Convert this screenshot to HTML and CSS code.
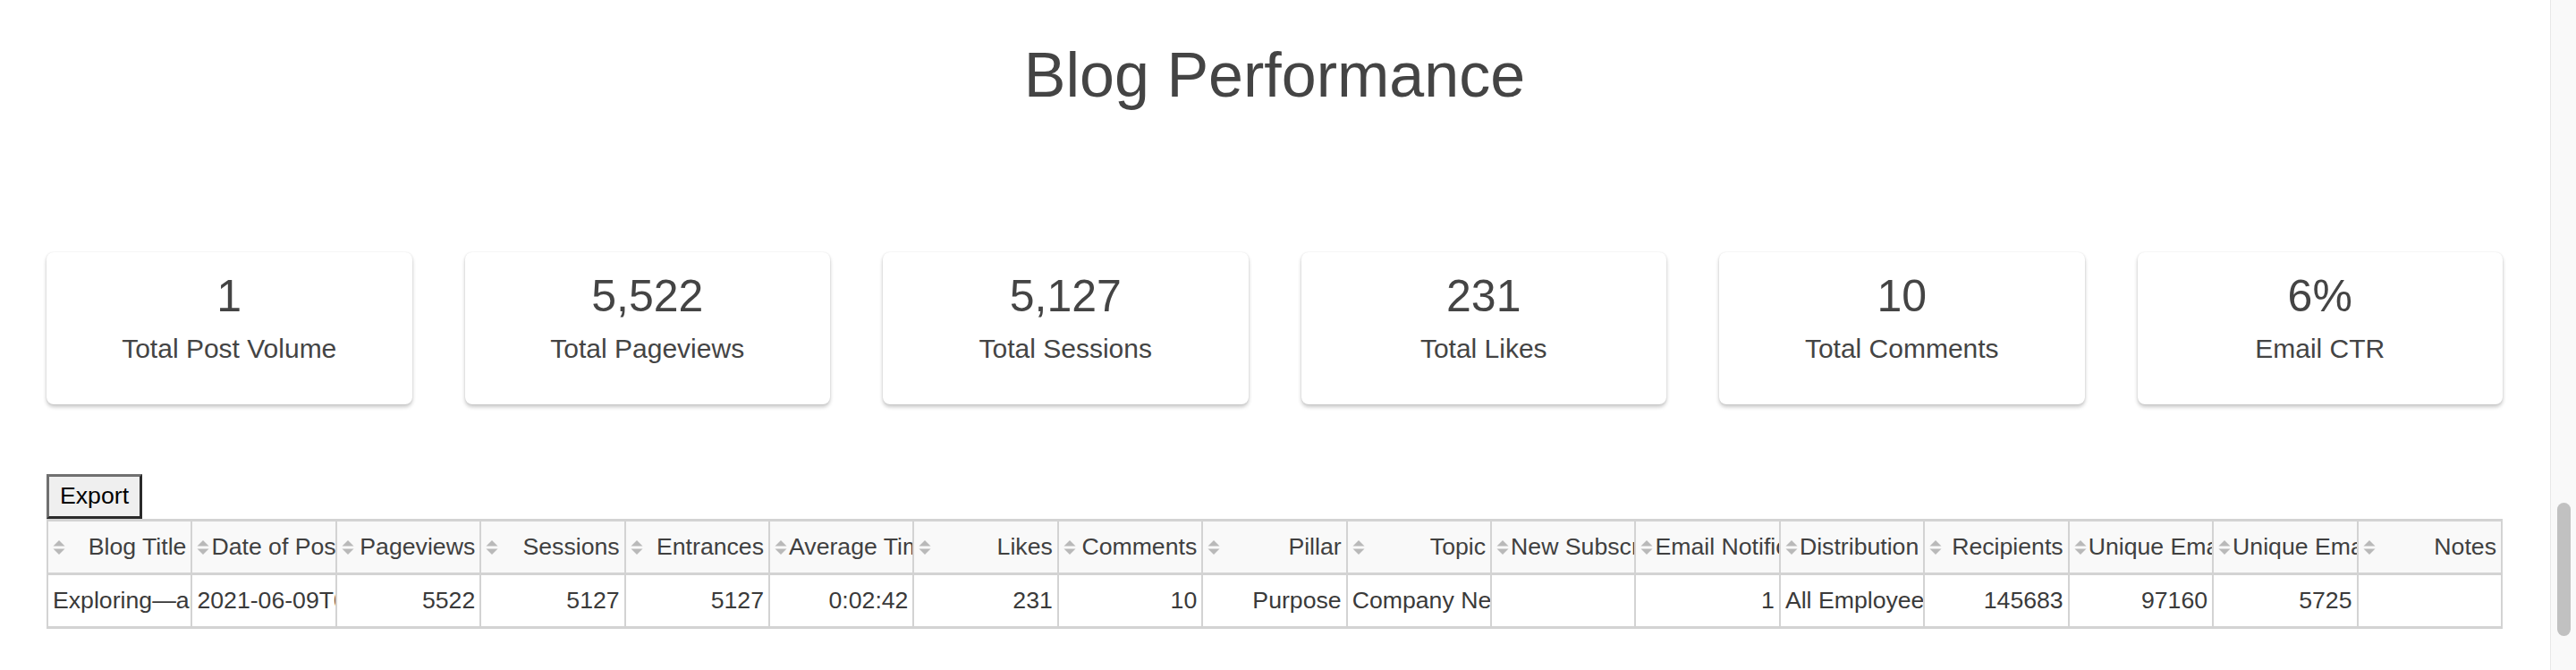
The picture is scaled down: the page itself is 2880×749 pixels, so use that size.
FILE: index.html
```html
<!DOCTYPE html>
<html lang="en">
<head>
<meta charset="utf-8">
<title>Blog Performance</title>
<link rel="stylesheet" href="styles.css">
</head>
<body>
<div class="page">
  <main class="main">
    <h1 class="title">Blog Performance</h1>
    <div class="cards">
      <div class="card"><div class="card-value">1</div><div class="card-label">Total Post Volume</div></div>
      <div class="card"><div class="card-value">5,522</div><div class="card-label">Total Pageviews</div></div>
      <div class="card"><div class="card-value">5,127</div><div class="card-label">Total Sessions</div></div>
      <div class="card"><div class="card-value">231</div><div class="card-label">Total Likes</div></div>
      <div class="card"><div class="card-value">10</div><div class="card-label">Total Comments</div></div>
      <div class="card"><div class="card-value">6%</div><div class="card-label">Email CTR</div></div>
    </div>
    <div class="toolbar"><button class="export" type="button">Export</button></div>
    <table class="data">
      <thead>
        <tr>
          <th><div class="th-inner"><svg class="sort" viewBox="0 0 14 16" width="14" height="16"><polygon points="7,0 13.5,6.5 0.5,6.5"/><polygon points="0.5,9.5 13.5,9.5 7,16"/></svg><span class="th-text">Blog Title</span></div></th>
          <th><div class="th-inner"><svg class="sort" viewBox="0 0 14 16" width="14" height="16"><polygon points="7,0 13.5,6.5 0.5,6.5"/><polygon points="0.5,9.5 13.5,9.5 7,16"/></svg><span class="th-text">Date of Posting</span></div></th>
          <th><div class="th-inner"><svg class="sort" viewBox="0 0 14 16" width="14" height="16"><polygon points="7,0 13.5,6.5 0.5,6.5"/><polygon points="0.5,9.5 13.5,9.5 7,16"/></svg><span class="th-text">Pageviews</span></div></th>
          <th><div class="th-inner"><svg class="sort" viewBox="0 0 14 16" width="14" height="16"><polygon points="7,0 13.5,6.5 0.5,6.5"/><polygon points="0.5,9.5 13.5,9.5 7,16"/></svg><span class="th-text">Sessions</span></div></th>
          <th><div class="th-inner"><svg class="sort" viewBox="0 0 14 16" width="14" height="16"><polygon points="7,0 13.5,6.5 0.5,6.5"/><polygon points="0.5,9.5 13.5,9.5 7,16"/></svg><span class="th-text">Entrances</span></div></th>
          <th><div class="th-inner"><svg class="sort" viewBox="0 0 14 16" width="14" height="16"><polygon points="7,0 13.5,6.5 0.5,6.5"/><polygon points="0.5,9.5 13.5,9.5 7,16"/></svg><span class="th-text">Average Time on Page</span></div></th>
          <th><div class="th-inner"><svg class="sort" viewBox="0 0 14 16" width="14" height="16"><polygon points="7,0 13.5,6.5 0.5,6.5"/><polygon points="0.5,9.5 13.5,9.5 7,16"/></svg><span class="th-text">Likes</span></div></th>
          <th><div class="th-inner"><svg class="sort" viewBox="0 0 14 16" width="14" height="16"><polygon points="7,0 13.5,6.5 0.5,6.5"/><polygon points="0.5,9.5 13.5,9.5 7,16"/></svg><span class="th-text">Comments</span></div></th>
          <th><div class="th-inner"><svg class="sort" viewBox="0 0 14 16" width="14" height="16"><polygon points="7,0 13.5,6.5 0.5,6.5"/><polygon points="0.5,9.5 13.5,9.5 7,16"/></svg><span class="th-text">Pillar</span></div></th>
          <th><div class="th-inner"><svg class="sort" viewBox="0 0 14 16" width="14" height="16"><polygon points="7,0 13.5,6.5 0.5,6.5"/><polygon points="0.5,9.5 13.5,9.5 7,16"/></svg><span class="th-text">Topic</span></div></th>
          <th><div class="th-inner"><svg class="sort" viewBox="0 0 14 16" width="14" height="16"><polygon points="7,0 13.5,6.5 0.5,6.5"/><polygon points="0.5,9.5 13.5,9.5 7,16"/></svg><span class="th-text">New Subscribers</span></div></th>
          <th><div class="th-inner"><svg class="sort" viewBox="0 0 14 16" width="14" height="16"><polygon points="7,0 13.5,6.5 0.5,6.5"/><polygon points="0.5,9.5 13.5,9.5 7,16"/></svg><span class="th-text">Email Notification</span></div></th>
          <th><div class="th-inner"><svg class="sort" viewBox="0 0 14 16" width="14" height="16"><polygon points="7,0 13.5,6.5 0.5,6.5"/><polygon points="0.5,9.5 13.5,9.5 7,16"/></svg><span class="th-text">Distribution</span></div></th>
          <th><div class="th-inner"><svg class="sort" viewBox="0 0 14 16" width="14" height="16"><polygon points="7,0 13.5,6.5 0.5,6.5"/><polygon points="0.5,9.5 13.5,9.5 7,16"/></svg><span class="th-text">Recipients</span></div></th>
          <th><div class="th-inner"><svg class="sort" viewBox="0 0 14 16" width="14" height="16"><polygon points="7,0 13.5,6.5 0.5,6.5"/><polygon points="0.5,9.5 13.5,9.5 7,16"/></svg><span class="th-text">Unique Email Opens</span></div></th>
          <th><div class="th-inner"><svg class="sort" viewBox="0 0 14 16" width="14" height="16"><polygon points="7,0 13.5,6.5 0.5,6.5"/><polygon points="0.5,9.5 13.5,9.5 7,16"/></svg><span class="th-text">Unique Email Clicks</span></div></th>
          <th><div class="th-inner"><svg class="sort" viewBox="0 0 14 16" width="14" height="16"><polygon points="7,0 13.5,6.5 0.5,6.5"/><polygon points="0.5,9.5 13.5,9.5 7,16"/></svg><span class="th-text">Notes</span></div></th>
        </tr>
      </thead>
      <tbody>
        <tr>
          <td>Exploring—an Inside Look at Our Culture</td>
          <td>2021-06-09T00:00:00</td>
          <td>5522</td>
          <td>5127</td>
          <td>5127</td>
          <td>0:02:42</td>
          <td>231</td>
          <td>10</td>
          <td>Purpose</td>
          <td>Company News</td>
          <td></td>
          <td>1</td>
          <td>All Employees</td>
          <td>145683</td>
          <td>97160</td>
          <td>5725</td>
          <td></td>
        </tr>
      </tbody>
    </table>
  </main>
  <div class="scrollbar"><div class="thumb"></div></div>
</div>
</body>
</html>
```

FILE: styles.css
```css
html, body {
  margin: 0;
  padding: 0;
  background: #ffffff;
}

body {
  font-family: "Liberation Sans", Arial, Helvetica, sans-serif;
  color: #444444;
}

.page {
  display: flex;
  height: 749px;
  overflow: hidden;
}

.main {
  flex: 1;
  min-width: 0;
  padding: 0 53px 0 52px;
}

.title {
  margin: 44px 0 0;
  font-size: 70px;
  font-weight: normal;
  line-height: 80px;
  text-align: center;
  color: #444444;
}

.cards {
  display: grid;
  grid-template-columns: repeat(6, 1fr);
  column-gap: 59px;
  margin-top: 158px;
}

.card {
  height: 170px;
  box-sizing: border-box;
  padding-top: 21px;
  background: #ffffff;
  border-radius: 8px;
  box-shadow: 0 3px 4px rgba(0, 0, 0, 0.22), 0 0 2px rgba(0, 0, 0, 0.10);
  text-align: center;
  color: #444444;
}

.card-value {
  font-size: 50px;
  line-height: 57px;
}

.card-label {
  margin-top: 12px;
  font-size: 30px;
  line-height: 35px;
}

.toolbar {
  display: flex;
  margin-top: 78px;
}

.export {
  font-family: "Liberation Sans", Arial, Helvetica, sans-serif;
  font-size: 26.67px;
  line-height: 31px;
  color: #000000;
  background: #efefef;
  padding: 6px 12px 7px;
  border-width: 3px;
  border-style: solid;
  border-color: #707070 #2a2a2a #2a2a2a #707070;
  margin: 0;
}

.data {
  width: 100%;
  table-layout: fixed;
  border-collapse: collapse;
  border-top: 3px solid #d3d3d3;
  border-bottom: 3px solid #d3d3d3;
  border-left: 2px solid #d3d3d3;
  border-right: 2px solid #d3d3d3;
  font-size: 26.67px;
  color: #3a3a3a;
}

.data th,
.data td {
  border: 2px solid #d3d3d3;
  overflow: hidden;
  white-space: nowrap;
  text-align: right;
  line-height: 31px;
}

.data th {
  padding: 13px 5px 13px 5px;
  background: #f9f9f9;
  font-weight: normal;
  color: #404040;
  border-bottom-width: 3px;
}

.data td {
  padding: 13px 5px;
  background: #ffffff;
}

.th-inner {
  display: flex;
  align-items: center;
}

.sort {
  flex: none;
  display: block;
  fill: #b9b9b9;
  margin-right: 2px;
}

.th-text {
  flex: 1;
  min-width: 0;
  text-align: right;
}

.scrollbar {
  flex: none;
  width: 29px;
  box-sizing: border-box;
  background: #f9f9f9;
  border-left: 1px solid #e8e8e8;
  padding-top: 562px;
}

.thumb {
  width: 15px;
  height: 149px;
  margin-left: 7px;
  border-radius: 8px;
  background: #c1c1c1;
}
```
